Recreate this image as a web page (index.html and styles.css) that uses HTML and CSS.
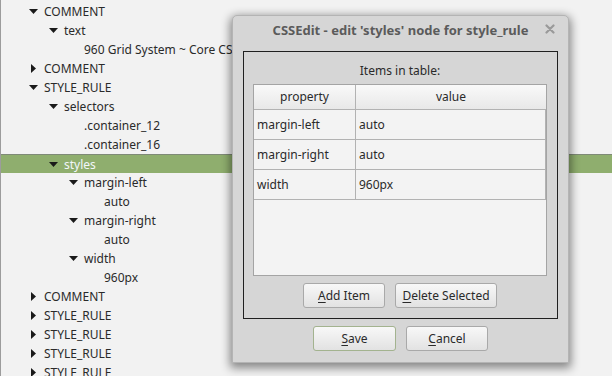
FILE: index.html
```html
<!DOCTYPE html>
<html>
<head>
<meta charset="utf-8">
<link rel="stylesheet" href="styles.css">
</head>
<body>
<div class="tree">
  <div class="row l0"><span class="arr"><svg width="10" height="9" viewBox="0 0 10 9"><polygon points="0,2 9,2 4.5,7" fill="#1a1a1a"/></svg></span><span>COMMENT</span></div>
  <div class="row l1"><span class="arr"><svg width="10" height="9" viewBox="0 0 10 9"><polygon points="0,2 9,2 4.5,7" fill="#1a1a1a"/></svg></span><span>text</span></div>
  <div class="row l2"><span class="arr"></span><span>960 Grid System ~ Core CSS</span></div>
  <div class="row l0"><span class="arr"><svg width="10" height="9" viewBox="0 0 10 9"><polygon points="2,0 7,4.5 2,9" fill="#1a1a1a"/></svg></span><span>COMMENT</span></div>
  <div class="row l0"><span class="arr"><svg width="10" height="9" viewBox="0 0 10 9"><polygon points="0,2 9,2 4.5,7" fill="#1a1a1a"/></svg></span><span>STYLE_RULE</span></div>
  <div class="row l1"><span class="arr"><svg width="10" height="9" viewBox="0 0 10 9"><polygon points="0,2 9,2 4.5,7" fill="#1a1a1a"/></svg></span><span>selectors</span></div>
  <div class="row l2"><span class="arr"></span><span>.container_12</span></div>
  <div class="row l2"><span class="arr"></span><span>.container_16</span></div>
  <div class="row l1 sel"><span class="arr"><svg width="10" height="9" viewBox="0 0 10 9"><polygon points="0,2 9,2 4.5,7" fill="#1a1a1a"/></svg></span><span>styles</span></div>
  <div class="row l2"><span class="arr"><svg width="10" height="9" viewBox="0 0 10 9"><polygon points="0,2 9,2 4.5,7" fill="#1a1a1a"/></svg></span><span>margin-left</span></div>
  <div class="row l3"><span class="arr"></span><span>auto</span></div>
  <div class="row l2"><span class="arr"><svg width="10" height="9" viewBox="0 0 10 9"><polygon points="0,2 9,2 4.5,7" fill="#1a1a1a"/></svg></span><span>margin-right</span></div>
  <div class="row l3"><span class="arr"></span><span>auto</span></div>
  <div class="row l2"><span class="arr"><svg width="10" height="9" viewBox="0 0 10 9"><polygon points="0,2 9,2 4.5,7" fill="#1a1a1a"/></svg></span><span>width</span></div>
  <div class="row l3"><span class="arr"></span><span>960px</span></div>
  <div class="row l0"><span class="arr"><svg width="10" height="9" viewBox="0 0 10 9"><polygon points="2,0 7,4.5 2,9" fill="#1a1a1a"/></svg></span><span>COMMENT</span></div>
  <div class="row l0"><span class="arr"><svg width="10" height="9" viewBox="0 0 10 9"><polygon points="2,0 7,4.5 2,9" fill="#1a1a1a"/></svg></span><span>STYLE_RULE</span></div>
  <div class="row l0"><span class="arr"><svg width="10" height="9" viewBox="0 0 10 9"><polygon points="2,0 7,4.5 2,9" fill="#1a1a1a"/></svg></span><span>STYLE_RULE</span></div>
  <div class="row l0"><span class="arr"><svg width="10" height="9" viewBox="0 0 10 9"><polygon points="2,0 7,4.5 2,9" fill="#1a1a1a"/></svg></span><span>STYLE_RULE</span></div>
  <div class="row l0"><span class="arr"><svg width="10" height="9" viewBox="0 0 10 9"><polygon points="2,0 7,4.5 2,9" fill="#1a1a1a"/></svg></span><span>STYLE_RULE</span></div>
</div>

<div class="dialog">
  <div class="titlebar">
    <span class="title">CSSEdit - edit 'styles' node for style_rule</span>
    <svg class="close" width="10" height="10" viewBox="0 0 10 10"><path d="M1.5 1.5 L8.5 8.5 M8.5 1.5 L1.5 8.5" stroke="#9a9a9a" stroke-width="2.2" stroke-linecap="round"/></svg>
  </div>
  <div class="body">
    <div class="frame">
      <div class="caption">Items in table:</div>
      <div class="table">
        <div class="trow head"><div class="c1">property</div><div class="c2">value</div></div>
        <div class="trow"><div class="c1">margin-left</div><div class="c2">auto</div></div>
        <div class="trow"><div class="c1">margin-right</div><div class="c2">auto</div></div>
        <div class="trow"><div class="c1">width</div><div class="c2">960px</div></div>
      </div>
      <div class="btns">
        <div class="btn b-add"><u>A</u>dd Item</div>
        <div class="btn b-del"><u>D</u>elete Selected</div>
      </div>
    </div>
    <div class="btns bottom">
      <div class="btn b-save def"><u>S</u>ave</div>
      <div class="btn b-cancel"><u>C</u>ancel</div>
    </div>
  </div>
</div>
</body>
</html>
```

FILE: styles.css
```css
html, body {
  margin: 0;
  padding: 0;
  width: 612px;
  height: 376px;
  overflow: hidden;
  font-family: "Noto Sans", "Open Sans", sans-serif;
  font-size: 12px;
  color: #2a2a2a;
}

.tree {
  box-sizing: border-box;
  width: 612px;
  height: 376px;
  background: #f2f2f2;
  border-left: 1px solid #9c9c9c;
  padding-top: 2px;
}

.row {
  box-sizing: border-box;
  height: 19px;
  display: flex;
  align-items: center;
  white-space: nowrap;
}

.row .arr {
  width: 10px;
  height: 9px;
  margin-right: 5px;
  display: flex;
  flex: none;
}

.l0 { padding-left: 28px; }
.l1 { padding-left: 48px; }
.l2 { padding-left: 68px; }
.l3 { padding-left: 88px; }

.row.sel {
  background: #8fae6e;
  border-top: 1px solid #7f8a77;
  color: #f2f7fb;
}

.dialog {
  position: absolute;
  left: 232px;
  top: 15px;
  width: 337px;
  height: 348px;
  box-sizing: border-box;
  background: #d6d6d6;
  border: 1px solid #b4b4b4;
  border-radius: 5px 5px 0 0;
  box-shadow: 0 3px 10px 2px rgba(0, 0, 0, 0.45);
  display: flex;
  flex-direction: column;
}

.titlebar {
  height: 28px;
  display: flex;
  align-items: center;
  justify-content: center;
  position: relative;
}

.title {
  font-weight: bold;
  font-size: 13px;
  color: #5b5b5b;
}

.close {
  position: absolute;
  right: 13px;
  top: 8px;
}

.body {
  padding: 7px 10px 0 10px;
  display: flex;
  flex-direction: column;
}

.frame {
  box-sizing: border-box;
  height: 268px;
  border: 1px solid #202020;
  padding: 0 10px 0 9px;
  display: flex;
  flex-direction: column;
}

.caption {
  text-align: center;
  height: 32px;
  line-height: 37px;
}

.table {
  box-sizing: border-box;
  height: 192px;
  background: #f3f3f3;
  border: 1px solid #a4a4a4;
}

.trow {
  display: flex;
  height: 30px;
  box-sizing: border-box;
  border-bottom: 1px solid #b2b2b2;
}

.trow .c1 {
  box-sizing: border-box;
  width: 102px;
  border-right: 1px solid #b2b2b2;
  padding-left: 3px;
  line-height: 29px;
}

.trow .c2 {
  flex: 1;
  padding-left: 3px;
  line-height: 29px;
  border-right: 1px solid #b2b2b2;
}

.trow.head {
  height: 25px;
  background: linear-gradient(#f9f9f9, #e8e8e8);
}

.trow.head .c1, .trow.head .c2 {
  text-align: center;
  line-height: 24px;
  padding-left: 0;
}

.trow.head .c2 { border-right: none; }

.btns {
  display: flex;
  justify-content: center;
  gap: 10px;
  margin-top: 7px;
}

.btns.bottom {
  margin-top: 7px;
}

.btn {
  box-sizing: border-box;
  height: 25px;
  line-height: 23px;
  text-align: center;
  border: 1px solid #a9a9a9;
  border-radius: 3px;
  background: linear-gradient(#f8f8f8, #e2e2e2);
}

.btn u { text-decoration-thickness: 1px; text-underline-offset: 2px; }

.b-add { width: 82px; }
.b-del { width: 102px; }
.b-save { width: 83px; }
.b-cancel { width: 82px; }

.btn.def {
  border-color: #a3b38f;
}
```
